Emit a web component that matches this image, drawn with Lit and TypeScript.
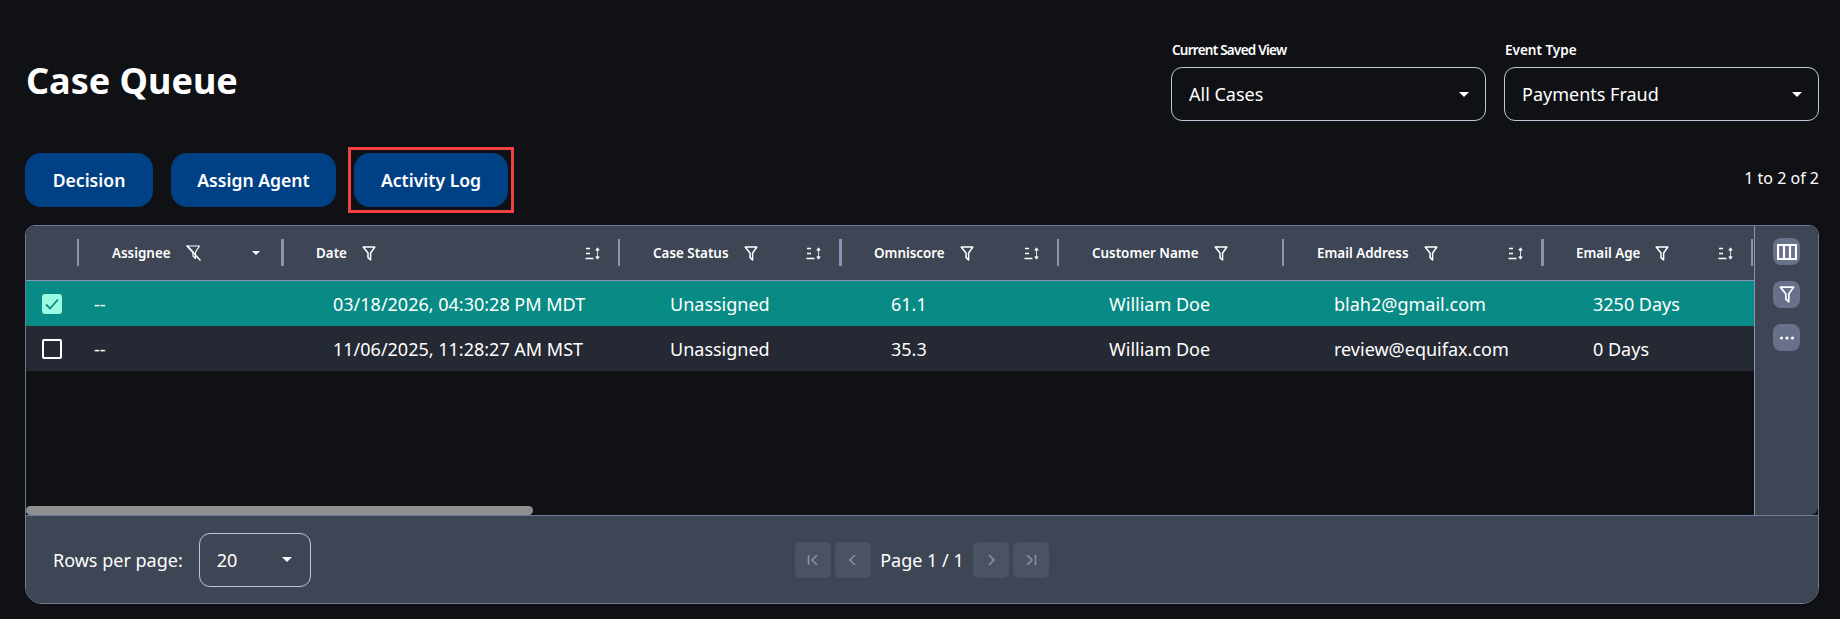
import { LitElement, html, css, svg } from 'lit';
import { customElement } from 'lit/decorators.js';

const COLUMNS = [
  { label: 'Assignee', sort: false },
  { label: 'Date', sort: true },
  { label: 'Case Status', sort: true },
  { label: 'Omniscore', sort: true },
  { label: 'Customer Name', sort: false },
  { label: 'Email Address', sort: true },
  { label: 'Email Age', sort: true },
];

// separators in the reference come out at two widths
const THICK = [1, 3, 6];

const ROWS = [
  { checked: true, cells: ['--', '03/18/2026, 04:30:28 PM MDT', 'Unassigned', '61.1', 'William Doe', 'blah2@gmail.com', '3250 Days'] },
  { checked: false, cells: ['--', '11/06/2025, 11:28:27 AM MST', 'Unassigned', '35.3', 'William Doe', 'review@equifax.com', '0 Days'] },
];

const funnel = svg`<path d="M1.2 1h11.6L8.6 7v7L6 11.6V7z" fill="none" stroke="currentColor" stroke-width="1.5" stroke-linejoin="round"/>`;

const filterIcon = html`<svg class="ico" width="14" height="15" viewBox="0 0 14 15">${funnel}</svg>`;
const filterOffIcon = html`<svg class="ico" width="15" height="16" viewBox="0 0 15 16">
  <path d="M1.5 1h12L9.5 7v6.5L7 11V7z" fill="none" stroke="currentColor" stroke-width="1.2" stroke-linejoin="round"/>
  <path d="M.5.5l14 15" stroke="currentColor" stroke-width="1.5"/>
</svg>`;
const sortIcon = html`<svg class="ico" width="15" height="13" viewBox="0 0 15 13">
  <path d="M1 1.5h4M1 6.5h4M.5 11.5h8" stroke="currentColor" stroke-width="1.3"/>
  <path d="M12.5 1.5v10M10.8 3.2l1.7-2.4 1.7 2.4zM10.8 9.8l1.7 2.4 1.7-2.4z" stroke="currentColor" fill="currentColor" stroke-width=".8"/>
</svg>`;
const caret = html`<span class="caret"></span>`;

@customElement('app-root')
export class AppRoot extends LitElement {
  static styles = css`
    :host {
      display: block;
      height: 619px;
      box-sizing: border-box;
      background: #0f1115;
      color: #fff;
      font-family: 'Noto Sans', sans-serif;
      padding: 0 21px 15px 25px;
      overflow: hidden;
    }
    .top {
      display: flex;
      justify-content: space-between;
      height: 147px;
      padding-top: 44px;
      box-sizing: border-box;
    }
    h1 {
      margin: 14px 0 0 1px;
      font-size: 36px;
      line-height: 45px;
      font-weight: 700;
    }
    .selects {
      display: flex;
      gap: 18px;
    }
    .field label {
      display: block;
      font-size: 13.5px;
      line-height: 13px;
      font-weight: 600;
      margin-bottom: 10px;
      margin-left: 1px;
    }
    .field label.tight { letter-spacing: -0.75px; }
    .select {
      box-sizing: border-box;
      width: 315px;
      height: 54px;
      border: 1px solid #bcc5da;
      border-radius: 11px;
      display: flex;
      align-items: center;
      justify-content: space-between;
      padding: 0 16px 0 17px;
      font-size: 18px;
    }
    .caret {
      width: 0;
      height: 0;
      border-left: 5px solid transparent;
      border-right: 5px solid transparent;
      border-top: 5px solid #fff;
    }
    .actions {
      display: flex;
      align-items: flex-start;
      gap: 18px;
      height: 78px;
      padding-top: 6px;
      box-sizing: border-box;
    }
    button.act {
      display: block;
      width: 128px;
      height: 54px;
      border: none;
      border-radius: 16px;
      background: #004185;
      color: #fff;
      font: 600 17.6px 'Noto Sans', sans-serif;
    }
    button.act.wide { width: 165px; }
    button.act.log { width: 154px; }
    .mark {
      border: 3px solid #f23f42;
      padding: 3px;
      margin: -6px;
    }
    .count {
      margin-left: auto;
      font-size: 16px;
      line-height: 50px;
    }
    .grid {
      box-sizing: border-box;
      height: 379px;
      border: 1px solid #6f7a96;
      border-radius: 10px 10px 17px 17px;
      overflow: hidden;
      display: flex;
      flex-direction: column;
    }
    .main {
      flex: 1;
      display: flex;
      min-height: 0;
    }
    .table {
      flex: 1;
      min-width: 0;
      display: flex;
      flex-direction: column;
    }
    .head, .row {
      display: grid;
      grid-template-columns: 51px 204px 337px 221px 218px 225px 259px 210px 1fr;
    }
    .head {
      height: 55px;
      box-sizing: border-box;
      background: #3e4555;
      border-bottom: 1px solid #8a94b0;
    }
    .th {
      display: flex;
      align-items: center;
      gap: 15px;
      padding: 0 18px 0 35px;
      font-size: 13.4px;
      font-weight: 600;
      position: relative;
    }
    /* column separator sits over the header cell edge */
    .th::before {
      content: '';
      position: absolute;
      left: 0;
      top: 13px;
      height: 27px;
      width: 2px;
      background: #8a94b0;
    }
    .th.thick::before { width: 3px; }
    .th.end { padding: 0; }
    .ico { color: #fff; display: block; flex: none; }
    .spring { margin-left: auto; }
    .th .caret {
      border-left-width: 4px;
      border-right-width: 4px;
      border-top-width: 4px;
      margin-right: 3px;
    }
    .row {
      height: 45px;
      align-items: center;
      font-size: 18px;
    }
    .row.on { background: #088b84; }
    .row.off { background: #252933; }
    .td { padding-left: 52px; white-space: nowrap; }
    .td.first { padding-left: 17px; }
    .box-cell { padding-left: 16px; display: flex; }
    .box {
      box-sizing: border-box;
      width: 20px;
      height: 20px;
      border: 2px solid #fff;
      border-radius: 2px;
    }
    .box.on {
      border: none;
      background: #9bfbe2;
      border-radius: 3px;
    }
    .box svg { display: block; }
    .empty { flex: 1; }
    .thumb {
      width: 507px;
      height: 9px;
      border-radius: 5px;
      background: #8e8f8f;
    }
    .side {
      width: 64px;
      box-sizing: border-box;
      background: #3e4555;
      border-left: 1px solid #8a94b0;
      border-bottom-right-radius: 8px;
      display: flex;
      flex-direction: column;
      align-items: center;
      padding-top: 12px;
    }
    .side-btn {
      width: 27px;
      height: 27px;
      border-radius: 8px;
      background: #68708a;
      color: #fff;
      display: flex;
      align-items: center;
      justify-content: center;
      margin-bottom: 16px;
    }
    .foot {
      height: 88px;
      box-sizing: border-box;
      background: #3e4555;
      border-top: 1px solid #6f7a96;
      display: grid;
      grid-template-columns: 1fr auto 1fr;
      align-items: center;
      padding: 0 27px;
      font-size: 18px;
    }
    .rows {
      display: flex;
      align-items: center;
      gap: 16px;
    }
    .rows .select {
      width: 112px;
      padding: 0 18px 0 17px;
    }
    .pager {
      display: flex;
      align-items: center;
      gap: 4px;
    }
    .pager span { padding: 0 5px; }
    .pg {
      width: 36px;
      height: 36px;
      border-radius: 5px;
      background: #4b5261;
      color: #8b919e;
      display: flex;
      align-items: center;
      justify-content: center;
    }
  `;

  private pg(d: string) {
    return html`<div class="pg"><svg width="16" height="16" viewBox="0 0 16 16"><path d=${d} fill="none" stroke="currentColor" stroke-width="1.6"/></svg></div>`;
  }

  render() {
    return html`
      <div class="top">
        <h1>Case Queue</h1>
        <div class="selects">
          <div class="field">
            <label class="tight">Current Saved View</label>
            <div class="select">All Cases ${caret}</div>
          </div>
          <div class="field">
            <label>Event Type</label>
            <div class="select">Payments Fraud ${caret}</div>
          </div>
        </div>
      </div>
      <div class="actions">
        <button class="act">Decision</button>
        <button class="act wide">Assign Agent</button>
        <div class="mark"><button class="act log">Activity Log</button></div>
        <div class="count">1 to 2 of 2</div>
      </div>
      <div class="grid">
        <div class="main">
          <div class="table">
            <div class="head">
              <div></div>
              ${COLUMNS.map(
                (c, i) => html`<div class="th ${THICK.includes(i) ? 'thick' : ''}">
                  ${c.label} ${i === 0 ? filterOffIcon : filterIcon}
                  ${i === 0
                    ? html`<span class="caret spring"></span>`
                    : c.sort
                      ? html`<span class="spring">${sortIcon}</span>`
                      : ''}
                </div>`
              )}
              <div class="th end"></div>
            </div>
            ${ROWS.map(
              r => html`<div class="row ${r.checked ? 'on' : 'off'}">
                <div class="box-cell">
                  ${r.checked
                    ? html`<div class="box on"><svg width="20" height="20" viewBox="0 0 20 20"><path d="M4 10.5l4 4 8-9" fill="none" stroke="#088b84" stroke-width="1.8"/></svg></div>`
                    : html`<div class="box"></div>`}
                </div>
                ${r.cells.map((c, i) => html`<div class="td ${i === 0 ? 'first' : ''}">${c}</div>`)}
              </div>`
            )}
            <div class="empty"></div>
            <div class="thumb"></div>
          </div>
          <div class="side">
            <div class="side-btn">
              <svg width="20" height="16" viewBox="0 0 20 16"><path d="M1 1h18v14H1zM7 1v14M13 1v14" fill="none" stroke="#fff" stroke-width="2.2"/></svg>
            </div>
            <div class="side-btn">
              <svg class="ico" width="16" height="17" viewBox="0 0 14 15">${funnel}</svg>
            </div>
            <div class="side-btn">
              <svg width="16" height="4" viewBox="0 0 16 4"><circle cx="2.5" cy="2" r="1.6" fill="#fff"/><circle cx="8" cy="2" r="1.6" fill="#fff"/><circle cx="13.5" cy="2" r="1.6" fill="#fff"/></svg>
            </div>
          </div>
        </div>
        <div class="foot">
          <div class="rows">
            Rows per page:
            <div class="select">20 ${caret}</div>
          </div>
          <div class="pager">
            ${this.pg('M3.5 3v10M12 3L7 8l5 5')}
            ${this.pg('M10 3L5 8l5 5')}
            <span>Page 1 / 1</span>
            ${this.pg('M6 3l5 5-5 5')}
            ${this.pg('M12.5 3v10M4 3l5 5-5 5')}
          </div>
          <div></div>
        </div>
      </div>
    `;
  }
}
